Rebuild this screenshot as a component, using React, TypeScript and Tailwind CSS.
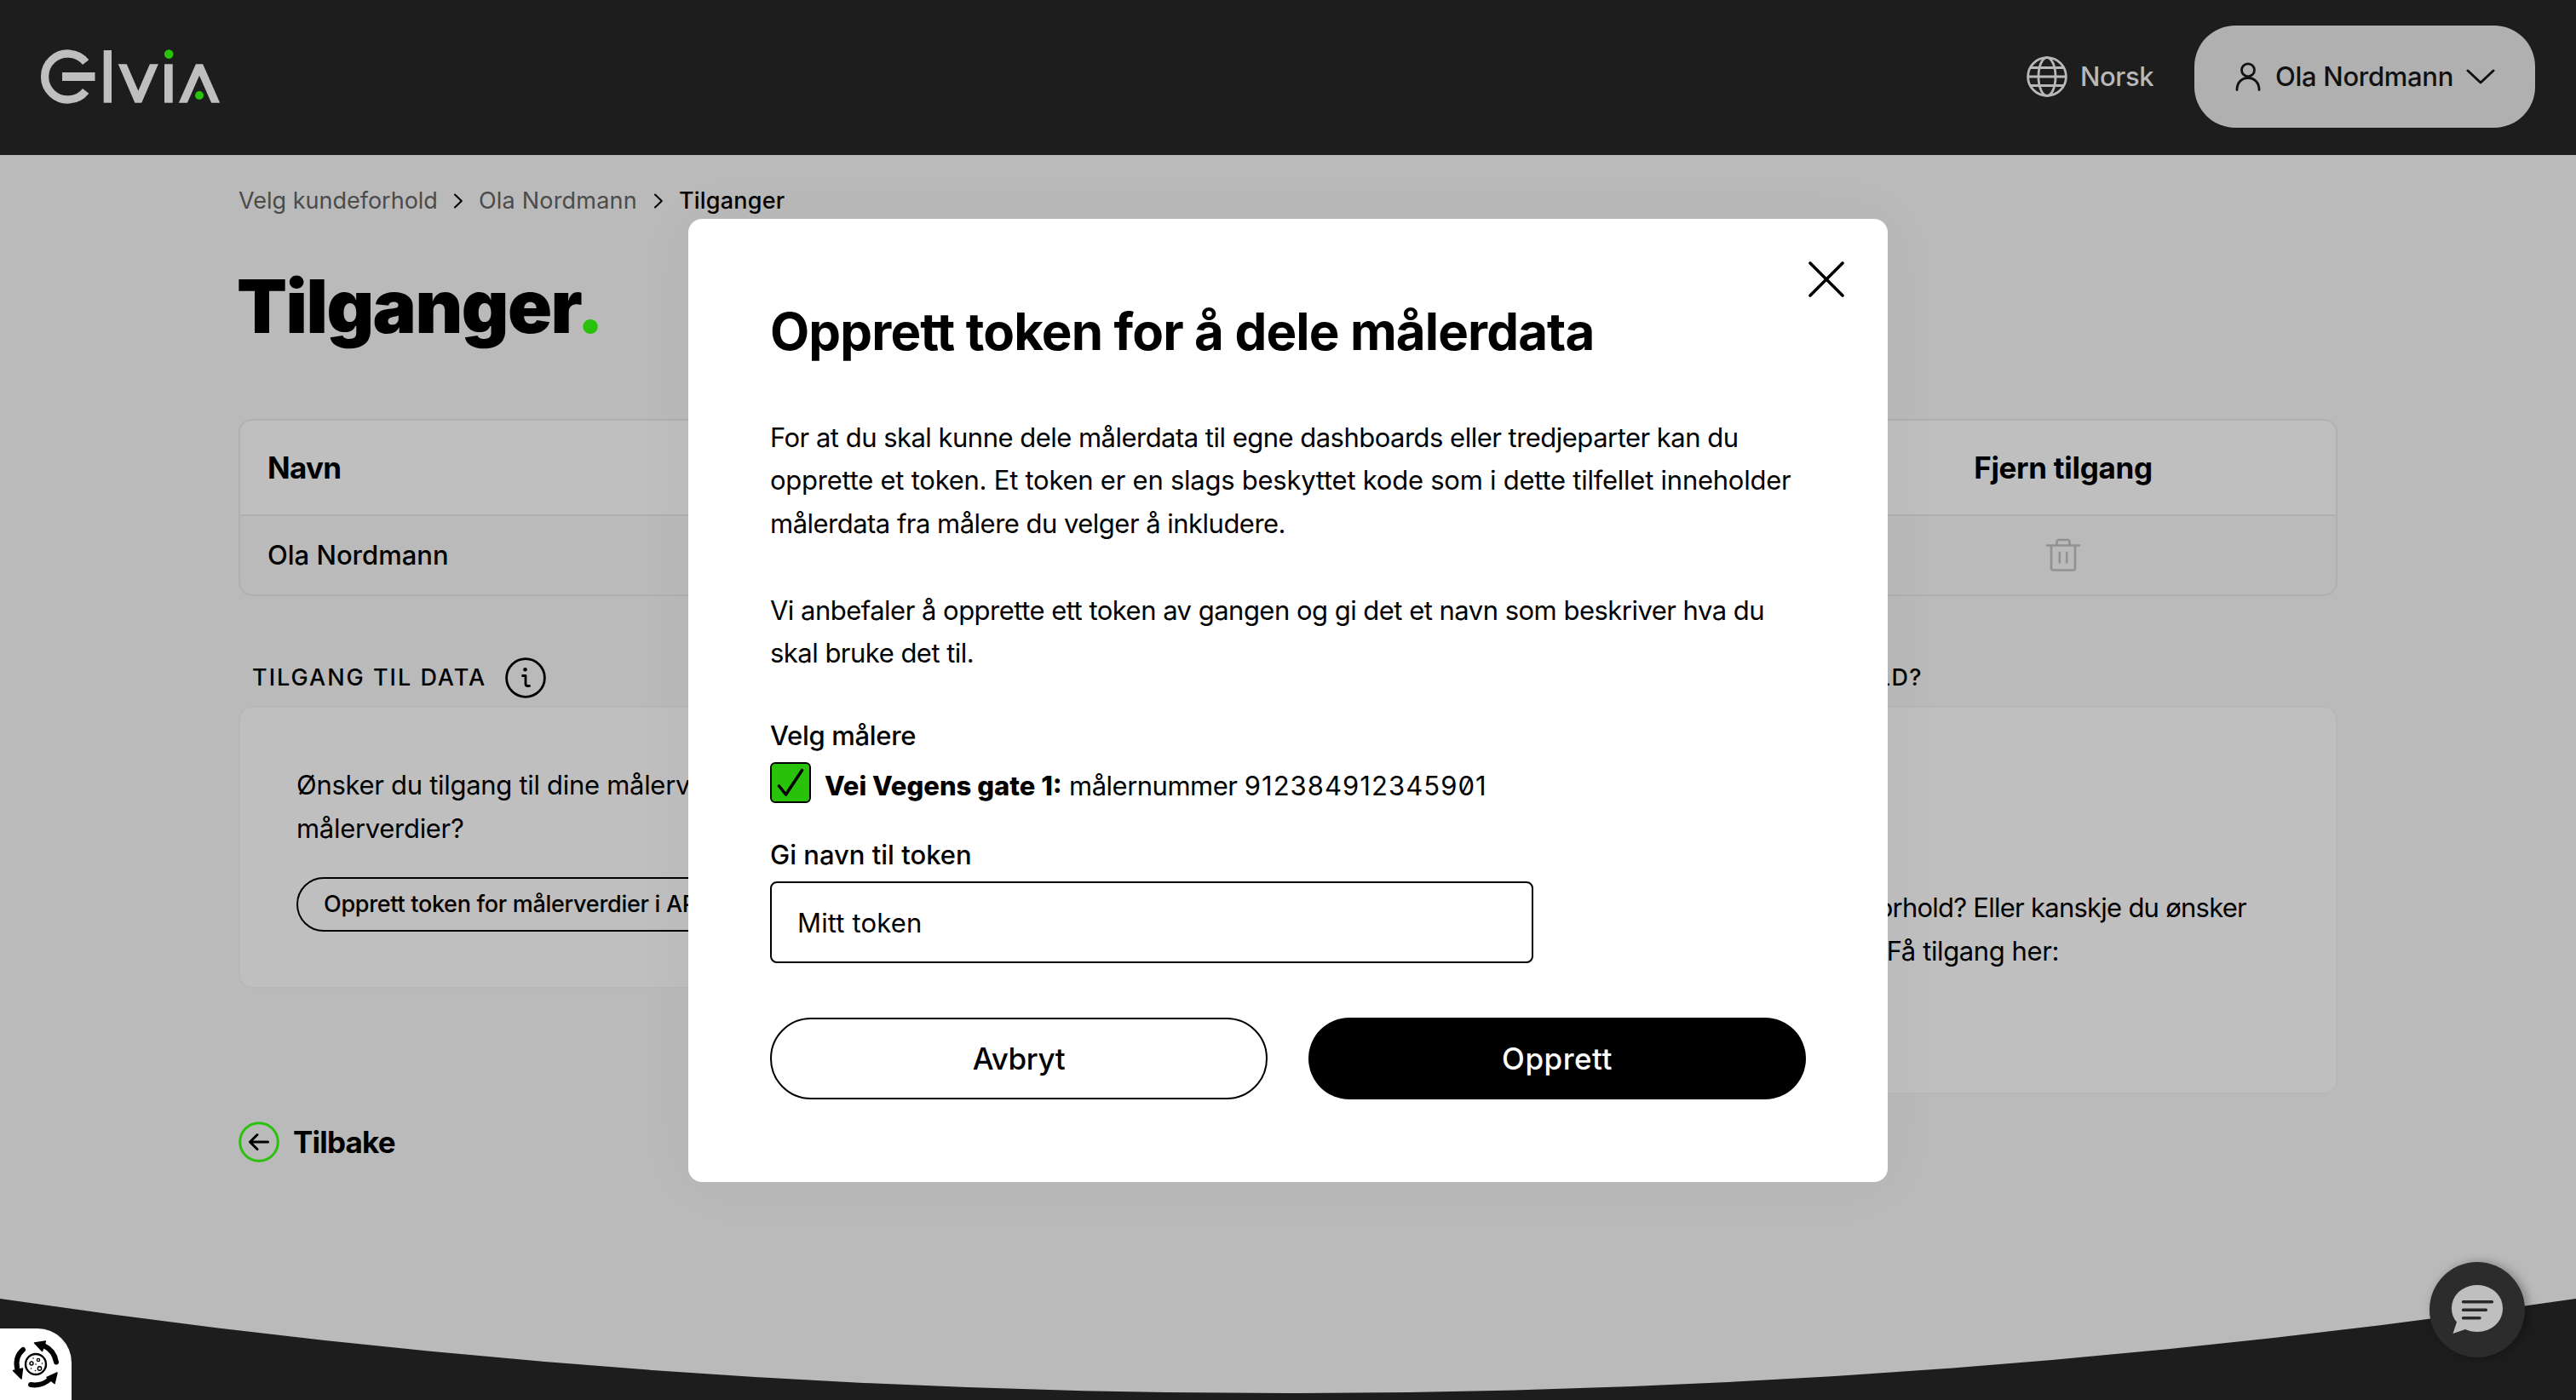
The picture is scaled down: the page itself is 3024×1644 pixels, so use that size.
import { useState } from "react";

const ElviaLogo = () => (
    <svg width="216" height="68" viewBox="0 0 216 68" fill="none">
        <defs>
            <clipPath id="low">
                <rect x="70" y="19.3" width="146" height="45.4" />
            </clipPath>
        </defs>
        <path d="M54.7 17.2A27 27 0 1 0 54.7 50.8" stroke="#bfbfbf" strokeWidth="9.3" />
        <rect x="27" y="29" width="38.5" height="10" fill="#bfbfbf" />
        <rect x="75.7" y="3" width="9.3" height="61.7" fill="#bfbfbf" />
        <g clipPath="url(#low)" stroke="#bfbfbf" strokeWidth="9.2" strokeMiterlimit="10">
            <path d="M95.9 15L116.3 62.3L136.7 15" />
            <path d="M167 69L188 21.3L209 69" />
        </g>
        <rect x="147" y="19.3" width="9.7" height="45.4" fill="#bfbfbf" />
        <circle cx="152.2" cy="7.6" r="5.3" fill="#29c20a" />
        <circle cx="188" cy="56" r="5" fill="#29c20a" />
    </svg>
);

const GlobeIcon = () => (
    <svg width="48" height="48" viewBox="0 0 48 48" fill="none" stroke="#b8b8b8" strokeWidth="2.8">
        <circle cx="24" cy="24" r="22.4" />
        <ellipse cx="24" cy="24" rx="10" ry="22.4" />
        <path d="M1.6 24H46.4M5 13.5H43M5 34.5H43" />
    </svg>
);

const UserIcon = () => (
    <svg width="30" height="34" viewBox="0 0 30 34" fill="none" stroke="#111" strokeWidth="2.8" strokeLinecap="round">
        <circle cx="15" cy="9.3" r="7.5" />
        <path d="M2 32.5C2 24 7.5 18.5 15 18.5S28 24 28 32.5" />
    </svg>
);

const Chevron = () => (
    <svg width="10" height="18" viewBox="0 0 10 18" fill="none" stroke="#000" strokeWidth="2" strokeLinecap="round" strokeLinejoin="round">
        <path d="M1 1.5L8.8 9L1 16.5" />
    </svg>
);

const TrashIcon = () => (
    <svg width="42" height="40" viewBox="0 0 42 40" fill="none" stroke="#919191" strokeWidth="2.6" strokeLinecap="round" strokeLinejoin="round">
        <path d="M2 8.5H40M13.5 8V4.5Q13.5 2 16 2H26Q28.5 2 28.5 4.5V8M7 9V35Q7 37.5 9.5 37.5H32.5Q35 37.5 35 35V9M16.8 17V28.5M25.2 17V28.5" />
    </svg>
);

const InfoIcon = () => (
    <svg width="48" height="48" viewBox="0 0 48 48" fill="none" stroke="#000" strokeWidth="2.8" strokeLinecap="round" strokeLinejoin="round">
        <circle cx="24" cy="24" r="22.4" />
        <path d="M20.5 21.5H24V31Q24 33.5 26.5 33.5H28.5" />
        <circle cx="23.5" cy="14.3" r="2.3" fill="#000" stroke="none" />
    </svg>
);

const BackIcon = () => (
    <svg width="48" height="48" viewBox="0 0 48 48" fill="none" strokeWidth="3" strokeLinecap="round" strokeLinejoin="round">
        <circle cx="24" cy="24" r="22.3" stroke="#29c20a" />
        <path d="M34.5 24H14M22 15.5L13.5 24L22 32.5" stroke="#000" />
    </svg>
);

const ChatIcon = () => (
    <svg width="64" height="60" viewBox="0 0 64 60">
        <path d="M32 1C48.5 1 62 12.5 62 28.5S48.5 56 32 56C27 56 22 55 18 53L3.5 58L8 44.5C4 40 2 34.500 2 28.5C2 12.5 15.5 1 32 1Z" fill="#bfbfbf" />
        <path d="M15.5 20.7H49.5M15.5 30.3H42.5M15.5 39.7H35" stroke="#292929" strokeWidth="3.4" strokeLinecap="round" />
    </svg>
);

const CookieIcon = () => (
    <svg width="56" height="58" viewBox="0 0 56 58" fill="none" stroke="#000">
        <circle cx="28" cy="29" r="12" strokeWidth="2.4" />
        <g strokeWidth="6" strokeLinecap="round">
            <path d="M52 26.5C50.5 18 45.5 11 38 7.5" />
            <path d="M13 12C7 17 4.5 25 6 33.5" />
            <path d="M22 53C31 54.5 39 52 45.5 45.5" />
        </g>
        <g fill="#000" strokeWidth="1.5" strokeLinejoin="round">
            <path d="M26.5 4L39.5 2L35.5 13.5Z" />
            <path d="M1.5 36.5L12.5 34L11 46Z" />
            <path d="M53 39L50 51.5L41 44.5Z" />
        </g>
        <circle cx="23" cy="28" r="2" strokeWidth="1.4" />
        <circle cx="31" cy="24" r="1.6" strokeWidth="1.4" />
        <circle cx="32.5" cy="34" r="2.2" strokeWidth="1.4" />
        <g fill="#000" stroke="none">
            <circle cx="25" cy="22" r="0.8" />
            <circle cx="35.5" cy="28" r="0.8" />
            <circle cx="22.5" cy="34" r="0.8" />
            <circle cx="27.5" cy="36.5" r="0.8" />
            <circle cx="28" cy="29" r="0.8" />
        </g>
    </svg>
);

function Header() {
    return (
        <header className="flex items-center justify-between h-[182px] pl-[46px] pr-12 bg-[#1d1d1d]">
            <div className="pb-0.5">
                <ElviaLogo />
            </div>
            <div className="flex items-center pb-0.5">
                <GlobeIcon />
                <span className="ml-[15px] w-[84px] text-[31px] font-medium tracking-[-0.4px] text-[#b8b8b8]">Norsk</span>
                <button className="flex items-center w-[400px] h-[120px] ml-[50px] pl-12 rounded-[48px] bg-[#b0b0b0] text-[#111]">
                    <UserIcon />
                    <span className="ml-[17px] w-[208px] text-[31px] font-medium tracking-[-0.3px] whitespace-nowrap text-left">
                        Ola Nordmann
                    </span>
                    <svg className="ml-4" width="34" height="18" viewBox="0 0 34 18" fill="none" stroke="#111" strokeWidth="3" strokeLinecap="round" strokeLinejoin="round">
                        <path d="M2 2L17 16L32 2" />
                    </svg>
                </button>
            </div>
        </header>
    );
}

function TokenModal() {
    const [checked, setChecked] = useState(true);
    const [name, setName] = useState("Mitt token");

    return (
        <div className="absolute inset-0 flex items-center justify-center">
            <div className="relative w-[1408px] h-[1131px] px-24 pt-[100px] rounded-2xl bg-white shadow-[0_0_80px_rgba(0,0,0,0.04)]">
                <button className="absolute top-[50px] right-[51px]">
                    <svg width="42" height="42" viewBox="0 0 42 42" stroke="#000" strokeWidth="3.6" strokeLinecap="round">
                        <path d="M2 2L40 40M40 2L2 40" />
                    </svg>
                </button>

                <h2 className="h-[64px] text-[60px] leading-[64px] font-bold tracking-[-0.86px] whitespace-nowrap">
                    Opprett token for å dele målerdata
                </h2>
                <div className="mt-[68px] text-[31px] leading-[50.8px] tracking-[-0.52px] whitespace-nowrap">
                    <p>
                        For at du skal kunne dele målerdata til egne dashboards eller tredjeparter kan du<br />
                        <span className="tracking-[-0.25px]">
                            opprette et token. Et token er en slags beskyttet kode som i dette tilfellet inneholder
                        </span><br />
                        målerdata fra målere du velger å inkludere.
                    </p>
                    <p className="mt-[50.8px]">
                        Vi anbefaler å opprette ett token av gangen og gi det et navn som beskriver hva du<br />
                        skal bruke det til.
                    </p>
                </div>

                <div className="mt-[47px] text-[31px] leading-[48px] font-medium tracking-[-0.3px]">Velg målere</div>
                <div className="flex items-center h-12 mt-[7px]">
                    <button
                        onClick={() => setChecked(!checked)}
                        className="flex items-center justify-center w-12 h-12 border-2 border-black rounded-[6px] bg-[#29c20a]"
                    >
                        {checked && (
                            <svg width="32" height="34" viewBox="0 0 32 34" fill="none" stroke="#000" strokeWidth="3.6" strokeLinecap="round" strokeLinejoin="round">
                                <path d="M2.5 21L10.5 31L29.5 2.5" />
                            </svg>
                        )}
                    </button>
                    <span className="ml-4 pt-[7px] text-[31px] whitespace-nowrap slashed-zero">
                        <b className="font-extrabold">Vei Vegens gate 1:</b>
                        <span className="tracking-[-0.5px]"> målernummer </span>
                        <span className="tracking-[1.05px]">912384912345901</span>
                    </span>
                </div>

                <div className="mt-[37px] text-[31px] leading-[48px] font-medium">Gi navn til token</div>
                <input
                    value={name}
                    onChange={(e) => setName(e.target.value)}
                    className="block w-[896px] h-24 mt-[7px] px-[30px] border-2 border-black rounded-lg text-[31px] tracking-[0.15px]"
                />

                <div className="grid grid-cols-2 gap-12 mt-16 text-[35px] font-medium">
                    <button className="h-24 border-2 border-black rounded-full tracking-[-0.4px]">Avbryt</button>
                    <button className="h-24 rounded-full bg-black text-white tracking-[0.5px]">Opprett</button>
                </div>
            </div>
        </div>
    );
}

export default function App() {
    return (
        <div className="relative w-[3024px] h-[1644px] overflow-hidden bg-[#bababa] text-black font-['Inter','Liberation_Sans',sans-serif]">
            <Header />

            <main className="w-[2464px] mx-auto">
                {/* BREADCRUMB */}
                <nav className="flex items-center h-10 mt-[34px] text-[27px] whitespace-nowrap text-[#4b4b4b]">
                    <span className="w-[234px]">Velg kundeforhold</span>
                    <span className="ml-[19px]"><Chevron /></span>
                    <span className="ml-[19px] w-[188px] tracking-[0.2px]">Ola Nordmann</span>
                    <span className="ml-[18px]"><Chevron /></span>
                    <span className="ml-[19px] font-medium tracking-[0.2px] text-black">Tilganger</span>
                </nav>

                <h1 className="mt-[54px] ml-[-2px] text-[86px] leading-[100px] font-black tracking-[-1.5px]">
                    Tilganger<span className="text-[#29c20a]">.</span>
                </h1>

                {/* TABLE */}
                <div className="mt-[82px] h-[208px] border-2 border-[#b0b0b0] rounded-2xl overflow-hidden">
                    <div className="flex items-center justify-between h-28 pl-8 border-b-2 border-[#b0b0b0] bg-[#bfbfbf] text-[35px] font-bold">
                        <span className="tracking-[-0.7px]">Navn</span>
                        <span className="w-[640px] text-center tracking-[-0.3px]">Fjern tilgang</span>
                    </div>
                    <div className="flex items-center justify-between h-[92px] pl-8 text-[31px] font-medium">
                        <span>Ola Nordmann</span>
                        <span className="flex justify-center w-[640px]"><TrashIcon /></span>
                    </div>
                </div>

                {/* CARDS */}
                <div className="grid grid-cols-2 gap-8 mt-[72px] items-start">
                    <section>
                        <div className="flex items-center h-12 pl-4 text-[27px] font-medium tracking-[2px]">
                            <span className="w-[297px] whitespace-nowrap">TILGANG TIL DATA</span>
                            <InfoIcon />
                        </div>
                        <div className="h-[332px] mt-[9px] px-[66px] pt-[65px] border-2 border-[#b7b7b7] rounded-2xl bg-[#bfbfbf]">
                            <p className="text-[31px] leading-[51px] tracking-[-0.3px]">
                                Ønsker du tilgang til dine målerverdier, eller<br />
                                målerverdier?
                            </p>
                            <button className="h-16 mt-8 px-[30px] border-2 border-black rounded-full text-[27px] font-medium tracking-[-0.3px]">
                                Opprett token for målerverdier i API
                            </button>
                        </div>
                    </section>
                    <section>
                        <div className="flex items-center justify-end h-12 pr-[487px] text-[27px] font-medium tracking-[1.4px]">
                            NYTT KUNDEFORHOLD?
                        </div>
                        <div className="h-[456px] mt-[9px] pt-[209px] border-2 border-[#b7b7b7] rounded-2xl bg-[#bfbfbf] text-[31px] leading-[51px] text-right">
                            <p className="pr-[105px] tracking-[-0.75px]">Mangler du et kundeforhold? Eller kanskje du ønsker</p>
                            <p className="pr-[325px] tracking-[-0.4px]">Få tilgang her:</p>
                        </div>
                    </section>
                </div>

                <a className="flex items-center w-fit h-12 mt-8 text-[35px] font-bold tracking-[-0.8px]">
                    <BackIcon />
                    <span className="ml-4">Tilbake</span>
                </a>
            </main>

            {/* FOOTER CURVE */}
            <svg className="absolute left-0 bottom-0" width="3024" height="119" viewBox="0 0 3024 119">
                <path d="M0 0Q1512 222 3024 0V119H0Z" fill="#1d1d1d" />
            </svg>

            <button className="absolute left-[2852px] top-[1482px] flex items-center justify-center w-28 h-28 rounded-full bg-[#2c2c2c] shadow-[4px_0_12px_rgba(0,0,0,0.3)]">
                <ChatIcon />
            </button>

            <TokenModal />

            <button className="absolute left-0 bottom-0 flex items-center justify-center w-[84px] h-[84px] rounded-tr-[40px] bg-white">
                <CookieIcon />
            </button>
        </div>
    );
}
